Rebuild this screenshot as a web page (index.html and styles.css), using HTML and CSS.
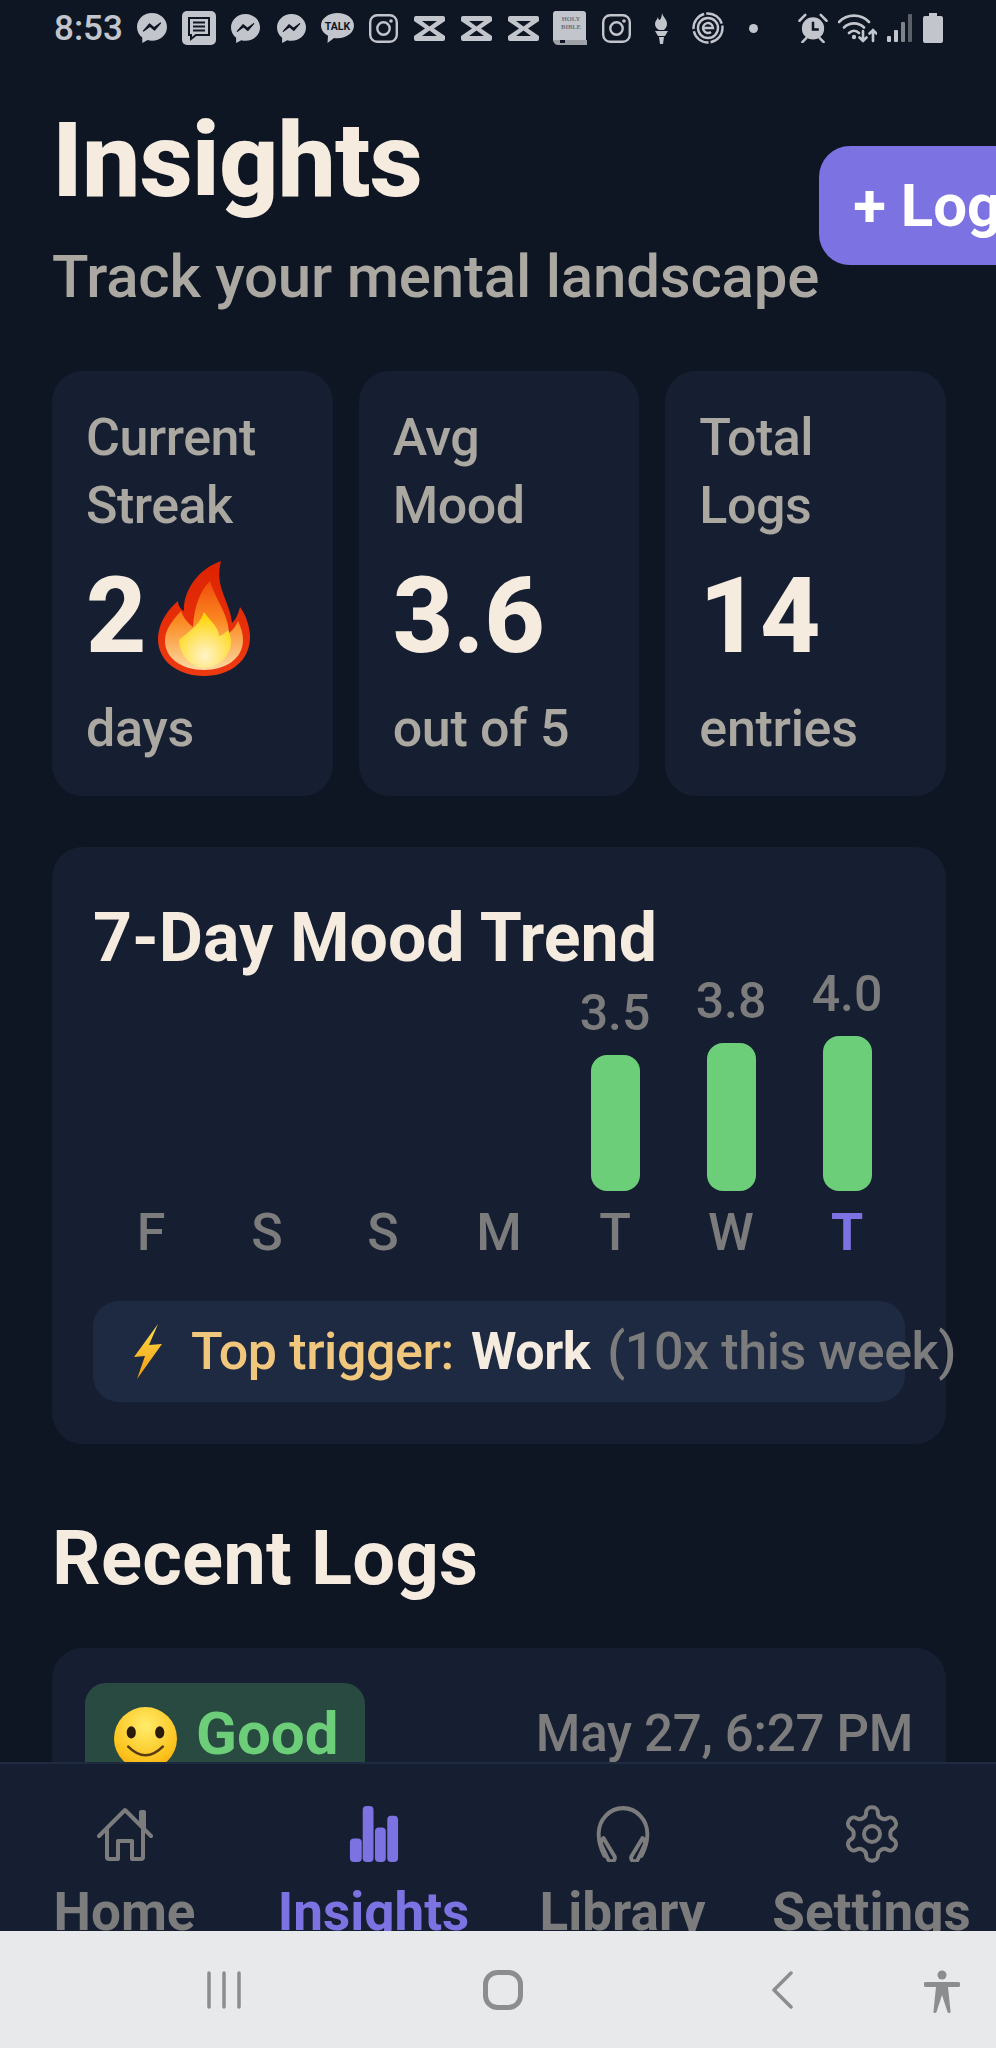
FILE: index.html
```html
<!DOCTYPE html>
<html lang="en">
<head>
<meta charset="utf-8">
<title>Insights</title>
<link rel="stylesheet" href="styles.css">
</head>
<body>
<svg class="defs" width="0" height="0" aria-hidden="true">
  <defs>
    <symbol id="messenger" viewBox="0 0 30 30">
      <path d="M15 0C6.7 0 0 6.200 0 14c0 4.300 2 8 5.300 10.600V30l5.300-2.900c1.400.4 2.900.6 4.400.6 8.300 0 15-6 15-13.700S23.300 0 15 0z" fill="#c2c5cb"/>
      <path d="M6.500 18l6-7 4.500 3.800L23.500 10l-6 7-4.500-3.800z" fill="#0e1624" stroke="#0e1624" stroke-width="1.200" stroke-linejoin="round"/>
    </symbol>
    <symbol id="instagram" viewBox="0 0 29 29">
      <rect x="1.200" y="1.200" width="26.600" height="26.600" rx="7" fill="none" stroke="#c2c5cb" stroke-width="2.400"/>
      <circle cx="14.500" cy="14.500" r="6.200" fill="none" stroke="#c2c5cb" stroke-width="2.400"/>
      <circle cx="22" cy="7" r="1.800" fill="#c2c5cb"/>
    </symbol>
    <symbol id="capcut" viewBox="0 0 33 25">
      <path d="M1 2a2 2 0 0 1 2-2h27a2 2 0 0 1 2 2v3l-11 7.500L32 20v3a2 2 0 0 1-2 2H3a2 2 0 0 1-2-2v-3l11-7.500L1 5z" fill="#c2c5cb"/>
      <path d="M9 5h15l-7.500 5.500zM16.500 14.500L24 20H9z" fill="#0e1624"/>
    </symbol>
  </defs>
</svg>

<div class="screen">
  <header class="status">
    <span class="clock">8:53</span>
    <div class="notifs">
      <svg class="ic w30"><use href="#messenger"/></svg>
      <svg class="ic w34" viewBox="0 0 34 34">
        <rect width="34" height="34" rx="5" fill="#c2c5cb"/>
        <path d="M7 7h20v17H14l-5 4v-4H7z" fill="none" stroke="#0e1624" stroke-width="2"/>
        <path d="M11 11.500h12M11 15.500h12M11 19.500h12" stroke="#0e1624" stroke-width="2"/>
      </svg>
      <svg class="ic w29"><use href="#messenger"/></svg>
      <svg class="ic w29 shift"><use href="#messenger"/></svg>
      <svg class="ic w33" viewBox="0 0 33 30">
        <path d="M16.500 0C7.400 0 0 5.500 0 12.500c0 4.300 2.800 8 7 10.200L6.500 30l6.500-5c1.200.2 2.300.3 3.500.3 9.100 0 16.500-5.700 16.500-12.800S25.600 0 16.500 0z" fill="#c2c5cb"/>
        <text class="talk" x="16.500" y="16.500" text-anchor="middle">TALK</text>
      </svg>
      <svg class="ic w29"><use href="#instagram"/></svg>
      <svg class="ic w33 cap"><use href="#capcut"/></svg>
      <svg class="ic w33 cap"><use href="#capcut"/></svg>
      <svg class="ic w33 cap"><use href="#capcut"/></svg>
      <svg class="ic w34 bible" viewBox="0 0 34 34">
        <path d="M2 0h28a3 3 0 0 1 3 3v26H6a3 3 0 0 0 0 3l-6-2V3a3 3 0 0 1 2-3z" fill="#c2c5cb"/>
        <path d="M0 29q1 5 5 5h29v-5z" fill="#9ea1a7"/>
        <rect x="7" y="29" width="5" height="3" fill="#0e1624"/>
        <text class="bibletxt" x="18" y="10" text-anchor="middle">HOLY</text>
        <text class="bibletxt" x="18" y="18" text-anchor="middle">BIBLE</text>
      </svg>
      <svg class="ic w29"><use href="#instagram"/></svg>
      <svg class="ic w13 torch" viewBox="0 0 13 31">
        <path d="M7 0c1 4 5 6 5 11 0 3-2 5-3 6H4c-2-1-4-3-4-6 0-3 2-4 3-7 0 2 1 3 2 3 1-2 2-4 2-7z" fill="#c2c5cb"/>
        <path d="M0 18h13l-3 5H3zM4 24h5l-1 7H5z" fill="#c2c5cb"/>
      </svg>
      <svg class="ic w32" viewBox="0 0 32 32">
        <g fill="none" stroke="#c2c5cb">
          <circle cx="16" cy="16" r="14.500" stroke-width="2.400" stroke-dasharray="20 2"/>
          <circle cx="16" cy="16" r="10" stroke-width="2.400"/>
          <path d="M11 16h10a5 5 0 1 0-2 4" stroke-width="2.400"/>
        </g>
      </svg>
    </div>
    <span class="dot"></span>
    <div class="sys">
      <svg class="ic w30 alarm" viewBox="0 0 30 31">
        <circle cx="15" cy="16" r="11.500" fill="#c2c5cb"/>
        <path d="M15 9v8h6" fill="none" stroke="#0e1624" stroke-width="2.600"/>
        <path d="M1 8l6-6M29 8l-6-6M4 30l4-4M26 30l-4-4" stroke="#c2c5cb" stroke-width="2.600" stroke-linecap="round"/>
      </svg>
      <svg class="ic w39 wifi" viewBox="0 0 39 30">
        <g fill="none" stroke="#c2c5cb" stroke-width="2.600" stroke-linecap="round">
          <path d="M1 9C9 .5 23 .5 31 9M6 14.500c5.500-5.500 14.500-5.500 20 0M11 20c3-3 7-3 10 0"/>
          <path d="M25 18v10M21.500 24.500l3.500 3.500 3.500-3.500M35 28V17M31.500 20.500l3.500-3.500 3.500 3.500"/>
        </g>
        <circle cx="16" cy="24" r="2.200" fill="#c2c5cb"/>
      </svg>
      <svg class="ic w26 signal" viewBox="0 0 26 28">
        <rect x="0" y="22" width="4" height="6" rx="1" fill="#c2c5cb"/>
        <rect x="7" y="16" width="4" height="12" rx="1" fill="#c2c5cb"/>
        <rect x="14" y="8" width="4" height="20" rx="1" fill="#7e828a"/>
        <rect x="21" y="0" width="4" height="28" rx="1" fill="#5b5f68"/>
      </svg>
      <svg class="ic w20" viewBox="0 0 20 30">
        <path d="M6 0h8v3h4a2 2 0 0 1 2 2v23a2 2 0 0 1-2 2H2a2 2 0 0 1-2-2V5a2 2 0 0 1 2-2h4z" fill="#c2c5cb"/>
      </svg>
    </div>
  </header>

  <main class="content">
    <section class="head">
      <div class="head-text">
        <h1 class="title">Insights</h1>
        <p class="subtitle">Track your mental landscape</p>
      </div>
      <button class="log-btn">+ Log</button>
    </section>

    <section class="stats">
      <article class="stat">
        <div class="stat-label">Current Streak</div>
        <div class="stat-value">2<svg class="flame" viewBox="0 0 92 115">
          <defs>
            <linearGradient id="fOuter" x1="0" y1="0" x2="0" y2="1"><stop offset="0" stop-color="#dd2200"/><stop offset="1" stop-color="#ee3a12"/></linearGradient>
            <linearGradient id="fMid" x1="0" y1="0" x2="0" y2="1"><stop offset="0" stop-color="#f04c0a"/><stop offset=".45" stop-color="#fb8a22"/><stop offset="1" stop-color="#fcd9a0"/></linearGradient>
            <radialGradient id="fCore" cx=".5" cy=".78" r=".7"><stop offset="0" stop-color="#fff4c8"/><stop offset=".35" stop-color="#ffe98a"/><stop offset="1" stop-color="#ffd60a"/></radialGradient>
          </defs>
          <path d="M63 0C40 8 25 30 26 50 22 48 20 44 20 40 6 52 0 66 0 78c0 22 20 37 46 37s46-15 46-39c0-10-4-22-10-30-2 8-4 12-8 16C72 40 56 26 63 0z" fill="url(#fOuter)"/>
          <path d="M52 20C42 30 36 46 35 66 30 62 26 58 23 50 12 62 7 70 7 80c0 18 18 29 39 29s39-11 39-30c0-6-2-13-5-19-2 5-5 9-9 12C70 52 58 40 52 20z" fill="url(#fMid)"/>
          <path d="M46 51C42 64 31 70 21 79c0 14 12 28 25 28s27-12 27-26c0-4-1-8-3-12-3 3-5 5-9 6 0-9-9-15-15-24z" fill="url(#fCore)"/>
        </svg></div>
        <div class="stat-sub">days</div>
      </article>
      <article class="stat">
        <div class="stat-label">Avg Mood</div>
        <div class="stat-value">3.6</div>
        <div class="stat-sub">out of 5</div>
      </article>
      <article class="stat">
        <div class="stat-label">Total Logs</div>
        <div class="stat-value">14</div>
        <div class="stat-sub">entries</div>
      </article>
    </section>

    <section class="card trend">
      <h2 class="section-title">7-Day Mood Trend</h2>
      <div class="chart">
        <div class="day"><span class="day-name">F</span></div>
        <div class="day"><span class="day-name">S</span></div>
        <div class="day"><span class="day-name">S</span></div>
        <div class="day"><span class="day-name">M</span></div>
        <div class="day"><span class="day-val">3.5</span><span class="bar" style="height:136px"></span><span class="day-name">T</span></div>
        <div class="day"><span class="day-val">3.8</span><span class="bar" style="height:148px"></span><span class="day-name">W</span></div>
        <div class="day"><span class="day-val">4.0</span><span class="bar" style="height:155px"></span><span class="day-name today">T</span></div>
      </div>
      <div class="trigger">
        <svg class="bolt" viewBox="0 0 28 55">
          <defs><linearGradient id="bGrad" x1="0" y1="0" x2="0" y2="1"><stop offset="0" stop-color="#ffe04a"/><stop offset="1" stop-color="#f09a10"/></linearGradient></defs>
          <path d="M24 0L0 33l11-1-8 23 25-35-13 1z" fill="url(#bGrad)"/>
        </svg>
        <span class="trigger-label">Top trigger:</span>
        <span class="trigger-name">Work</span>
        <span class="trigger-count">(10x this week)</span>
      </div>
    </section>

    <h2 class="section-title recent">Recent Logs</h2>

    <section class="log">
      <div class="log-top">
        <div class="mood">
          <svg class="smile" viewBox="0 0 62 62">
            <defs><radialGradient id="sGrad" cx=".5" cy=".3" r=".8"><stop offset="0" stop-color="#ffec6a"/><stop offset=".7" stop-color="#fcc21b"/><stop offset="1" stop-color="#f09a12"/></radialGradient></defs>
            <circle cx="31" cy="31" r="31" fill="url(#sGrad)"/>
            <ellipse cx="17" cy="25" rx="4.500" ry="6" fill="#2b1b0a"/>
            <ellipse cx="45" cy="25" rx="4.500" ry="6" fill="#2b1b0a"/>
            <path d="M14 39q17 17 34 0" fill="none" stroke="#5a3a10" stroke-width="2.500" stroke-linecap="round"/>
          </svg>
          <span class="mood-text">Good</span>
        </div>
        <span class="log-date">May 27, 6:27 PM</span>
      </div>
    </section>
  </main>

  <nav class="tabs">
    <a class="tab">
      <svg class="tab-ic" viewBox="0 0 56 54" fill="none" stroke="currentColor" stroke-width="4" stroke-linecap="round" stroke-linejoin="round">
        <path d="M2 29L28 3l26 26"/>
        <path d="M44 18V5h3v16" />
        <path d="M10 23v27a2 2 0 0 0 2 2h9V34h14v18h9a2 2 0 0 0 2-2V23"/>
      </svg>
      <span class="tab-label">Home</span>
    </a>
    <a class="tab active">
      <svg class="tab-ic" viewBox="0 0 49 57" fill="currentColor">
        <rect x="0" y="33" width="12" height="24" rx="4"/>
        <rect x="13" y="0" width="11" height="57" rx="4"/>
        <rect x="25.500" y="22" width="11" height="35" rx="4"/>
        <rect x="38" y="10" width="11" height="47" rx="4"/>
      </svg>
      <span class="tab-label">Insights</span>
    </a>
    <a class="tab">
      <svg class="tab-ic" viewBox="0 0 54 54" fill="none" stroke="currentColor" stroke-width="4" stroke-linecap="round" stroke-linejoin="round">
        <g transform="translate(27 0) scale(.94 1) translate(-27 0)">
          <path d="M8 48C4 41 2 34 2 27a25 25 0 0 1 50 0c0 7-2 14-6 21"/>
          <path d="M7 31l11 17a3.500 3.500 0 0 1-1 5c-2 1-4 0-5-1L5 38c-1-3 0-6 2-7z"/>
          <path d="M47 31L36 48a3.500 3.500 0 0 0 1 5c2 1 4 0 5-1l7-14c1-3 0-6-2-7z"/>
        </g>
      </svg>
      <span class="tab-label">Library</span>
    </a>
    <a class="tab">
      <svg class="tab-ic gear" viewBox="0 0 24 24" fill="none" stroke="currentColor" stroke-width="1.500" stroke-linecap="round" stroke-linejoin="round">
        <path d="M12.220 2h-.44a2 2 0 0 0-2 2v.18a2 2 0 0 1-1 1.730l-.43.25a2 2 0 0 1-2 0l-.15-.08a2 2 0 0 0-2.730.73l-.22.38a2 2 0 0 0 .73 2.730l.15.1a2 2 0 0 1 1 1.720v.51a2 2 0 0 1-1 1.740l-.15.09a2 2 0 0 0-.73 2.730l.22.38a2 2 0 0 0 2.730.73l.15-.08a2 2 0 0 1 2 0l.43.25a2 2 0 0 1 1 1.730V20a2 2 0 0 0 2 2h.44a2 2 0 0 0 2-2v-.18a2 2 0 0 1 1-1.730l.43-.25a2 2 0 0 1 2 0l.15.08a2 2 0 0 0 2.730-.73l.22-.39a2 2 0 0 0-.73-2.730l-.15-.08a2 2 0 0 1-1-1.740v-.5a2 2 0 0 1 1-1.740l.15-.09a2 2 0 0 0 .73-2.730l-.22-.38a2 2 0 0 0-2.730-.73l-.15.08a2 2 0 0 1-2 0l-.43-.25a2 2 0 0 1-1-1.730V4a2 2 0 0 0-2-2z"/>
        <circle cx="12" cy="12" r="3"/>
      </svg>
      <span class="tab-label">Settings</span>
    </a>
  </nav>

  <footer class="sysnav">
    <svg class="nav-recents" viewBox="0 0 34 38" fill="none" stroke="#8b8d8e" stroke-width="3.500" stroke-linecap="round">
      <path d="M2 2v34M17 2v34M32 2v34"/>
    </svg>
    <svg class="nav-home" viewBox="0 0 40 40" fill="none" stroke="#8b8d8e" stroke-width="5">
      <rect x="2.500" y="2.500" width="35" height="35" rx="12"/>
    </svg>
    <svg class="nav-back" viewBox="0 0 21 38" fill="none" stroke="#8b8d8e" stroke-width="3.500" stroke-linecap="round" stroke-linejoin="round">
      <path d="M19 2L2 19l17 17"/>
    </svg>
    <svg class="nav-a11y" viewBox="0 0 36 44" fill="#8b8d8e">
      <circle cx="18" cy="5" r="4.500"/>
      <path d="M2 12h32a2 2 0 0 1 0 5h-10l2.500 24a1.500 1.500 0 0 1-3 1L18 25l-5.500 17a1.500 1.500 0 0 1-3-1L12 17H2a2 2 0 0 1 0-5z"/>
    </svg>
  </footer>
</div>
</body>
</html>
```
FILE: styles.css
```css
* { box-sizing: border-box; }
html, body { margin: 0; padding: 0; }
body { background: #0e1624; font-family: Roboto, "Liberation Sans", sans-serif; }
.defs { position: absolute; }
.screen { width: 996px; height: 2048px; display: flex; flex-direction: column; overflow: hidden; background: #0e1624; color: #f5ebdf; }

/* status bar */
.status { flex: 0 0 56px; display: flex; align-items: center; padding-left: 54px; color: #c2c5cb; }
.clock { font-size: 35px; line-height: 40px; font-weight: 500; margin-right: 17px; margin-top: 2px; width: 66px; white-space: nowrap; }
.notifs { display: flex; align-items: center; gap: 15px; }
.sys { display: flex; align-items: center; gap: 10px; margin-left: 40px; }
.ic { display: block; height: 30px; flex: none; }
.w13 { width: 13px; } .w20 { width: 20px; } .w26 { width: 26px; height: 28px; } .w29 { width: 29px; height: 29px; }
.w30 { width: 30px; } .w32 { width: 32px; height: 32px; } .w33 { width: 33px; } .w34 { width: 34px; height: 34px; } .w39 { width: 39px; }
.shift { margin-left: 2px; }
.cap { height: 25px; margin-right: -1px; }
.bible { margin-left: -1px; }
.torch { height: 31px; margin: 0 9px; }
.talk { font: 700 10.500px Roboto, sans-serif; fill: #0e1624; }
.bibletxt { font: 700 6.500px "Liberation Serif", serif; fill: #6f7279; }
.dot { width: 9px; height: 9px; border-radius: 50%; background: #c2c5cb; margin-left: 25px; }

/* content */
.content { flex: 1 1 0; min-height: 0; overflow: hidden; padding: 0 50px 0 52px; }
.head { display: flex; align-items: center; width: 1000px; margin-top: 42px; }
.head-text { flex: none; }
.title { margin: 0 0 18px; font-size: 104px; line-height: 125px; font-weight: 800; letter-spacing: -1px; }
.subtitle { margin: 0; font-size: 60px; line-height: 72px; font-weight: 500; letter-spacing: -.2px; color: #aba8a2; }
.log-btn { flex: none; height: 119px; padding: 0 34px; border: 0; border-radius: 31px; background: #7c72e2; color: #fff; font: 700 60px/72px Roboto, sans-serif; }

.stats { display: grid; grid-template-columns: repeat(3, 1fr); gap: 26px; margin-top: 58px; }
.stat { background: #161f32; border-radius: 31px; padding: 33px 34px; min-width: 0; }
.stat-label { font-size: 52px; line-height: 68px; font-weight: 500; letter-spacing: -.5px; color: #aba8a2; }
.stat-value { display: flex; align-items: center; margin-top: 12px; height: 130px; font-size: 105px; line-height: 130px; font-weight: 800; }
.flame { width: 94px; height: 115px; margin-left: 10px; flex: none; margin-top: 2px; }
.stat-sub { margin-top: 13px; font-size: 52px; line-height: 68px; font-weight: 500; letter-spacing: -.3px; color: #aba8a2; }

.card { background: #161f32; border-radius: 31px; }
.trend { margin-top: 51px; padding: 42px 41px; }
.section-title { margin: 0; font-size: 68px; line-height: 98px; font-weight: 700; }
.chart { display: grid; grid-template-columns: repeat(7, 1fr); grid-template-rows: 276px; height: 276px; }
.day { display: flex; flex-direction: column; align-items: center; justify-content: flex-end; min-height: 0; }
.day-val { font-size: 50px; line-height: 60px; font-weight: 500; color: #7d7c7d; margin-bottom: 12px; }
.bar { width: 49px; border-radius: 16px; background: #6dce79; flex: none; }
.day-name { font-size: 52px; line-height: 60px; font-weight: 500; color: #7d7c7d; margin-top: 12px; }
.today { color: #7c72e2; font-weight: 700; }
.trigger { display: flex; align-items: center; gap: 17px; height: 101px; margin-top: 38px; padding-left: 41px; border-radius: 26px; background: #1e2a42; font-size: 52px; line-height: 60px; font-weight: 500; letter-spacing: -.4px; white-space: nowrap; }
.bolt { width: 28px; height: 55px; flex: none; margin-right: 12px; }
.trigger-label { color: #f0c77c; }
.trigger-name { color: #f5ebdf; font-weight: 700; }
.trigger-count { color: #7d7c7d; }

.recent { margin-top: 65px; font-size: 76px; letter-spacing: .2px; }
.log { margin-top: 41px; height: 300px; padding: 35px 33px 35px 33px; background: #161f32; border-radius: 31px; }
.log-top { display: flex; align-items: center; justify-content: space-between; }
.mood { display: flex; align-items: center; gap: 19px; height: 102px; padding: 0 27px 0 29px; border-radius: 21px; background: #284a40; }
.smile { width: 63px; height: 63px; flex: none; margin-top: 9px; }
.mood-text { font-size: 60px; line-height: 70px; font-weight: 700; color: #6dce79; }
.log-date { font-size: 51px; line-height: 60px; font-weight: 500; letter-spacing: -.3px; color: #7d7c7d; }

/* tabs */
.tabs { flex: 0 0 169px; display: grid; grid-template-columns: repeat(4, 1fr); overflow: hidden; background: #161f32; border-top: 2px solid #1f2b40; color: #7d7c7d; }
.tab { display: flex; flex-direction: column; align-items: center; padding-top: 42px; min-width: 0; white-space: nowrap; }
.tab.active { color: #7c72e2; }
.tab-ic { display: block; height: 56px; width: 56px; flex: none; }
.gear { width: 64px; height: 64px; margin: -4px 0; }
.tab-label { margin-top: 20px; font-size: 53px; line-height: 60px; font-weight: 700; }

/* android nav */
.sysnav { flex: 0 0 117px; display: flex; align-items: center; background: #e8e9ea; }
.nav-recents { width: 34px; height: 38px; margin-left: 207px; }
.nav-home { width: 40px; height: 40px; margin-left: 242px; }
.nav-back { width: 21px; height: 38px; margin-left: 249px; }
.nav-a11y { width: 36px; height: 44px; margin-left: 131px; margin-top: 5px; }
```
